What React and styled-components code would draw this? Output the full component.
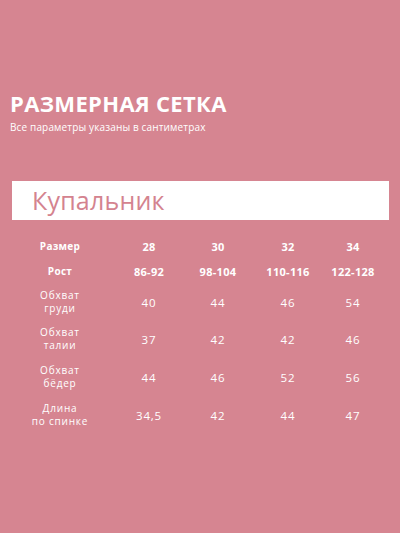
import React from 'react';
import styled, { createGlobalStyle } from 'styled-components';

const GlobalStyle = createGlobalStyle`
	html, body {
		margin: 0;
		padding: 0;
		background: #d68591;
	}
	* {
		box-sizing: border-box;
	}
`;

const Page = styled.div`
	width: 400px;
	height: 533px;
	background: #d68591;
	color: #ffffff;
	font-family: 'Open Sans', 'Liberation Sans', sans-serif;
	padding-top: 88px;
	overflow: hidden;
`;

const Title = styled.h1`
	margin: 0 0 0 10px;
	font-size: 22px;
	line-height: 30px;
	font-weight: 700;
	letter-spacing: 0.35px;
`;

const Subtitle = styled.p`
	margin: 2px 0 0 10px;
	font-size: 10px;
	line-height: 14px;
	letter-spacing: 0.15px;
`;

const Band = styled.div`
	margin: 47px 11px 0 12px;
	height: 39px;
	background: #ffffff;
	display: flex;
	align-items: center;
	padding-left: 20px;
`;

const BandTitle = styled.span`
	color: #d4838f;
	font-size: 25px;
	line-height: 1;
	letter-spacing: 0.2px;
`;

const Table = styled.div`
	margin-top: 14px;
	display: grid;
	grid-template-columns: 120px 58px 80px 60px 70px;
	grid-template-rows: 24px 26px 36px 38px 38px 38px;
`;

const Cell = styled.div`
	display: flex;
	align-items: center;
	justify-content: center;
	text-align: center;
	font-size: ${(p) => (p.$label ? '10px' : p.$bold ? '11px' : '11.5px')};
	line-height: 13px;
	font-weight: ${(p) => (p.$bold ? 700 : 400)};
	letter-spacing: ${(p) => (p.$bold ? '0.3px' : '0.8px')};
`;

const rows = [
	{ label: 'Размер', bold: true, values: ['28', '30', '32', '34'] },
	{ label: 'Рост', bold: true, values: ['86-92', '98-104', '110-116', '122-128'] },
	{ label: ['Обхват', 'груди'], values: ['40', '44', '46', '54'] },
	{ label: ['Обхват', 'талии'], values: ['37', '42', '42', '46'] },
	{ label: ['Обхват', 'бёдер'], values: ['44', '46', '52', '56'] },
	{ label: ['Длина', 'по спинке'], values: ['34,5', '42', '44', '47'] },
];

const App = () => {
	return (
		<Page>
			<GlobalStyle />
			<Title>РАЗМЕРНАЯ СЕТКА</Title>
			<Subtitle>Все параметры указаны в сантиметрах</Subtitle>
			<Band>
				<BandTitle>Купальник</BandTitle>
			</Band>
			<Table>
				{rows.map((row, i) => (
					<React.Fragment key={i}>
						<Cell $label $bold={row.bold}>
							{Array.isArray(row.label) ? (
								<span>
									{row.label[0]}
									<br />
									{row.label[1]}
								</span>
							) : (
								row.label
							)}
						</Cell>
						{row.values.map((v, j) => (
							<Cell key={j} $bold={row.bold}>
								{v}
							</Cell>
						))}
					</React.Fragment>
				))}
			</Table>
		</Page>
	);
};

export default App;
